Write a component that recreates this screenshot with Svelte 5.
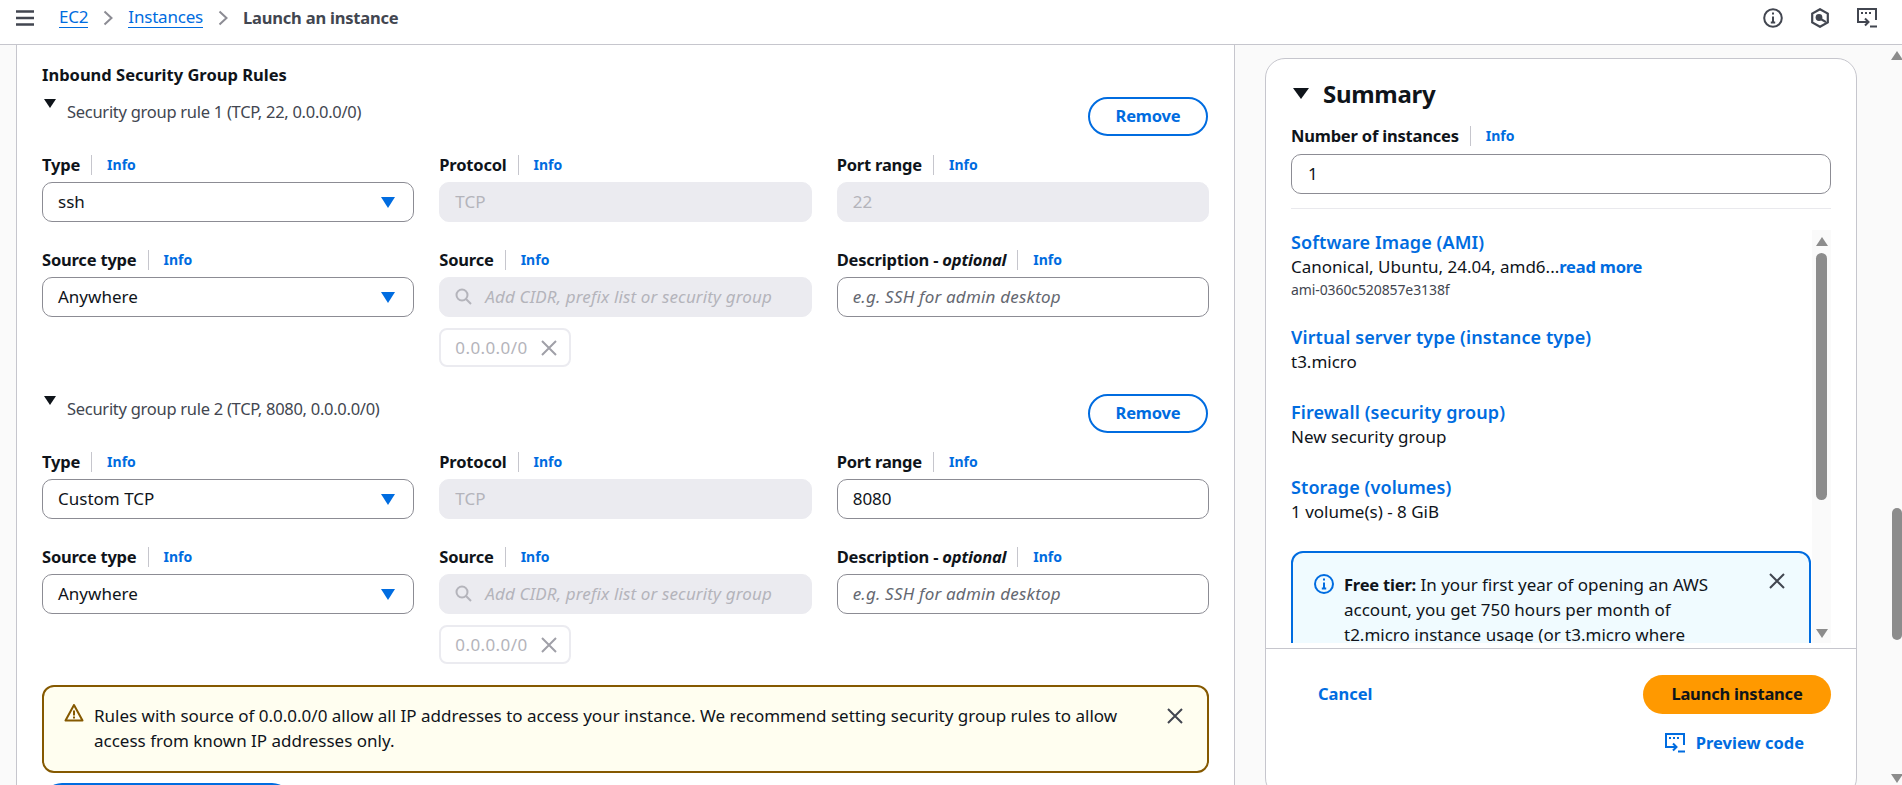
<script>
  const rules = [
    { title: 'Security group rule 1 (TCP, 22, 0.0.0.0/0)', type: 'ssh', port: '22', portDisabled: true },
    { title: 'Security group rule 2 (TCP, 8080, 0.0.0.0/0)', type: 'Custom TCP', port: '8080', portDisabled: false }
  ];
</script>

{#snippet info()}
  <span class="sep"></span><a class="info" href="#top">Info</a>
{/snippet}

{#snippet chevron()}
  <svg class="crumb-sep" width="10" height="16" viewBox="0 0 10 16"><path d="M1.5 1.5 8.5 8l-7 6.5" fill="none" stroke="#8c8c94" stroke-width="2"/></svg>
{/snippet}

{#snippet close()}
  <svg width="16" height="16" viewBox="0 0 16 16"><path d="M1 1l14 14M15 1 1 15" fill="none" stroke="currentColor" stroke-width="2"/></svg>
{/snippet}

{#snippet terminal(color)}
  <svg width="20" height="20" viewBox="0 0 20 20" fill="none" stroke={color} stroke-width="2">
    <path d="M6 14H1V1h18v11"/>
    <path d="M4 5h2M8 5h2M12 5h2" stroke-width="2"/>
    <path d="M4 14h7M8 10.5l3.5 3.5L8 17.5M13 18.5h7"/>
  </svg>
{/snippet}

<div class="page">
  <header class="topbar">
    <svg class="burger" width="18" height="16" viewBox="0 0 18 16"><path d="M0 1.5h18M0 8h18M0 14.5h18" stroke="#424650" stroke-width="2.4"/></svg>
    <nav class="crumbs">
      <a href="#top">EC2</a>
      {@render chevron()}
      <a href="#top">Instances</a>
      {@render chevron()}
      <span class="current">Launch an instance</span>
    </nav>
    <div class="top-icons">
      <svg width="20" height="20" viewBox="0 0 20 20" fill="none" stroke="#424650" stroke-width="2"><circle cx="10" cy="10" r="8.8"/><path d="M10 8.5V15M7.8 14.6h4.4"/><path d="M10 4.6v2" /></svg>
      <svg width="18" height="20" viewBox="0 0 18 20" fill="none" stroke="#424650" stroke-width="2.2"><path d="M9 1.2 16.8 5.6v8.8L9 18.8 1.2 14.4V5.6z"/><circle cx="8" cy="9.5" r="3.4" fill="#424650" stroke="none"/><path d="M9 10.5l6 3.6"/></svg>
      {@render terminal('#424650')}
    </div>
  </header>

  <div class="content">
    <main class="form">
      <h4 class="rules-title">Inbound Security Group Rules</h4>

      {#each rules as rule}
        <section class="rule">
          <div class="rule-head">
            <div class="rule-title"><span class="caret small"></span>{rule.title}</div>
            <button class="remove">Remove</button>
          </div>

          <div class="grid">
            <div class="field">
              <div class="label"><b>Type</b>{@render info()}</div>
              <div class="control select">{rule.type}<span class="arrow"></span></div>
            </div>
            <div class="field">
              <div class="label"><b>Protocol</b>{@render info()}</div>
              <div class="control off">TCP</div>
            </div>
            <div class="field">
              <div class="label"><b>Port range</b>{@render info()}</div>
              <div class="control" class:off={rule.portDisabled}>{rule.port}</div>
            </div>

            <div class="field">
              <div class="label"><b>Source type</b>{@render info()}</div>
              <div class="control select">Anywhere<span class="arrow"></span></div>
            </div>
            <div class="field">
              <div class="label"><b>Source</b>{@render info()}</div>
              <div class="control off search">
                <svg width="17" height="17" viewBox="0 0 17 17" fill="none" stroke="#b4b4bb" stroke-width="2"><circle cx="7" cy="7" r="5.5"/><path d="M11 11l5 5"/></svg>
                <i>Add CIDR, prefix list or security group</i>
              </div>
              <div class="token">0.0.0.0/0 {@render close()}</div>
            </div>
            <div class="field">
              <div class="label"><b>Description - <i>optional</i></b>{@render info()}</div>
              <div class="control placeholder"><i>e.g. SSH for admin desktop</i></div>
            </div>
          </div>
        </section>
      {/each}

      <div class="alert warn">
        <svg class="alert-icon" width="20" height="20" viewBox="0 0 20 20" fill="none" stroke="#855900" stroke-width="2"><path d="M10 2 1.5 17.5h17z" stroke-linejoin="round"/><path d="M10 7.5v5M10 13.6v2"/></svg>
        <p>Rules with source of 0.0.0.0/0 allow all IP addresses to access your instance. We recommend setting security group rules to allow access from known IP addresses only.</p>
        <span class="alert-close">{@render close()}</span>
      </div>

      <button class="add-rule" aria-label="Add security group rule"></button>
    </main>

    <aside class="side">
      <div class="card">
        <h2 class="summary"><span class="caret"></span>Summary</h2>
        <div class="count">
          <div class="label"><b>Number of instances</b>{@render info()}</div>
          <div class="control">1</div>
        </div>
        <div class="scroller">
          <div class="details">
            <div class="item">
              <a href="#top">Software Image (AMI)</a>
              <p>Canonical, Ubuntu, 24.04, amd6...<a href="#top">read more</a></p>
              <small>ami-0360c520857e3138f</small>
            </div>
            <div class="item"><a href="#top">Virtual server type (instance type)</a><p>t3.micro</p></div>
            <div class="item"><a href="#top">Firewall (security group)</a><p>New security group</p></div>
            <div class="item"><a href="#top">Storage (volumes)</a><p>1 volume(s) - 8 GiB</p></div>
            <div class="alert tier">
              <svg class="alert-icon" width="20" height="20" viewBox="0 0 20 20" fill="none" stroke="#006ce0" stroke-width="2"><circle cx="10" cy="10" r="9"/><path d="M10 8.5V15M7.8 14.6h4.4M10 4.6v2"/></svg>
              <p><b>Free tier:</b> In your first year of opening an AWS account, you get 750 hours per month of t2.micro instance usage (or t3.micro where</p>
              <span class="alert-close">{@render close()}</span>
            </div>
          </div>
          <div class="bar inner">
            <span class="up"></span>
            <span class="thumb"></span>
            <span class="down"></span>
          </div>
        </div>
        <footer class="actions">
          <a class="cancel" href="#top">Cancel</a>
          <div class="action-col">
            <button class="launch">Launch instance</button>
            <a class="preview" href="#top">{@render terminal('#006ce0')}Preview code</a>
          </div>
        </footer>
      </div>
    </aside>

    <div class="bar outer">
      <span class="up"></span>
      <span class="thumb"></span>
      <span class="down"></span>
    </div>
  </div>
</div>

<style>
  :global(body) {
    margin: 0;
    background: #fafafa;
  }

  .page {
    height: 785px;
    overflow: hidden;
    font-family: "Noto Sans", "Open Sans", sans-serif;
    font-size: 17px;
    line-height: 25px;
    color: #0f141a;
  }

  a {
    color: #006ce0;
    text-decoration: none;
  }

  p {
    margin: 0;
  }

  .topbar {
    height: 44px;
    background: #fff;
    border-bottom: 1px solid #c6c6cd;
    display: flex;
    align-items: center;
    padding: 0 25px 0 16px;
  }

  .burger {
    margin-top: -9px;
  }

  .crumbs {
    display: flex;
    align-items: center;
    gap: 15px;
    margin-left: 25px;
    margin-top: -9px;
    letter-spacing: -0.2px;
  }

  .crumbs a {
    line-height: 20px;
    border-bottom: 1px solid #006ce0;
  }

  .current {
    font-weight: 700;
    font-size: 16.5px;
    color: #424650;
  }

  .top-icons {
    margin-left: auto;
    margin-top: -9px;
    display: flex;
    gap: 28px;
    align-items: center;
  }

  .content {
    display: flex;
    height: 740px;
  }

  .form {
    width: 1219px;
    margin-left: 16px;
    flex: none;
    box-sizing: border-box;
    background: #fff;
    border-left: 1px solid #c6c6cd;
    border-right: 1px solid #c6c6cd;
    padding: 17px 25px 0 25px;
  }

  .rules-title {
    margin: 0;
    font-size: 16.5px;
    font-weight: 700;
  }

  .rule {
    height: 297px;
  }

  .rule-head {
    display: flex;
    justify-content: space-between;
    align-items: flex-start;
    height: 65px;
  }

  .rule-title {
    display: flex;
    align-items: flex-start;
    color: #424650;
    margin-top: 12px;
    font-size: 16.5px;
    letter-spacing: -0.28px;
  }

  .caret {
    width: 0;
    height: 0;
    border-left: 8px solid transparent;
    border-right: 8px solid transparent;
    border-top: 11px solid #0f141a;
  }

  .caret.small {
    border-left-width: 6.5px;
    border-right-width: 6.5px;
    border-top-width: 9px;
    margin: 0 11px 0 2px;
  }

  .remove {
    width: 120px;
    height: 39px;
    border: 2px solid #006ce0;
    border-radius: 20px;
    background: #fff;
    color: #006ce0;
    font: inherit;
    font-size: 16.5px;
    letter-spacing: -0.2px;
    font-weight: 700;
    padding: 0 0 2px;
    margin: 10px 1px 0 0;
  }

  .grid {
    display: grid;
    grid-template-columns: repeat(3, 1fr);
    column-gap: 25px;
    row-gap: 25px;
  }

  .label {
    display: flex;
    align-items: center;
    height: 25px;
    margin-bottom: 5px;
  }

  .label b {
    font-size: 16.5px;
    font-weight: 700;
    letter-spacing: -0.2px;
  }

  .sep {
    width: 1px;
    height: 20px;
    background: #c6c6cd;
    margin: 0 15px 0 11px;
  }

  .info {
    font-size: 14px;
    font-weight: 700;
  }

  .control {
    height: 40px;
    box-sizing: border-box;
    border: 1px solid #8c8c94;
    border-radius: 10px;
    background: #fff;
    padding: 0 15px 2px;
    display: flex;
    align-items: center;
  }

  .select {
    justify-content: space-between;
  }

  .arrow {
    width: 0;
    height: 0;
    border-left: 7px solid transparent;
    border-right: 7px solid transparent;
    border-top: 11px solid #006ce0;
    margin: 2px 3px 0 0;
  }

  .off {
    background: #ebebf0;
    border-color: #ebebf0;
    color: #b4b4bb;
  }

  .search {
    gap: 13px;
    white-space: nowrap;
  }

  .search i {
    letter-spacing: 0.14px;
  }

  .placeholder {
    color: #656871;
  }

  .placeholder i {
    letter-spacing: 0.2px;
  }

  .token {
    margin-top: 11px;
    width: 132px;
    height: 39px;
    box-sizing: border-box;
    border: 2px solid #ebebf0;
    border-radius: 8px;
    color: #b4b4bb;
    padding: 0 12px 0 14px;
    letter-spacing: 0.4px;
    display: flex;
    align-items: center;
    justify-content: space-between;
  }

  .token svg {
    color: #a0a0a8;
  }

  .alert {
    position: relative;
    box-sizing: border-box;
    border: 2px solid;
    border-radius: 12px;
    display: flex;
    align-items: flex-start;
  }

  .warn {
    margin-top: 4px;
    height: 88px;
    background: #fffef0;
    border-color: #855900;
    padding: 16px 24px 0 20px;
  }

  .warn p {
    width: 1040px;
    margin-left: 10px;
  }

  .alert-close {
    color: #424650;
    display: flex;
    margin-left: auto;
    margin-top: 5px;
  }

  .add-rule {
    display: block;
    margin: 10px 0 0;
    width: 250px;
    height: 40px;
    border: none;
    border-radius: 20px;
    background: #006ce0;
  }

  .side {
    flex: none;
    width: 657px;
    padding: 13px 0 0 30px;
    box-sizing: border-box;
  }

  .card {
    width: 592px;
    height: 740px;
    box-sizing: border-box;
    background: #fff;
    border: 1px solid #c6c6cd;
    border-radius: 20px;
    padding: 0 25px;
  }

  .summary {
    margin: 0;
    padding-top: 3px;
    height: 62px;
    display: flex;
    align-items: center;
    gap: 14px;
    font-size: 24px;
    font-weight: 700;
    letter-spacing: -0.3px;
  }

  .summary .caret {
    margin-left: 2px;
  }

  .count {
    padding-bottom: 14px;
    border-bottom: 1px solid #e9e9ed;
  }

  .count .label {
    margin: -1px 0 6px;
  }

  .count .control {
    padding-left: 16px;
  }

  .scroller {
    margin-top: 21px;
    height: 413px;
    display: flex;
    overflow: hidden;
    justify-content: space-between;
  }

  .details {
    width: 520px;
    flex: none;
  }

  .item {
    height: 75px;
  }

  .item > a {
    font-size: 18px;
    font-weight: 600;
    letter-spacing: 0.1px;
    display: block;
  }

  .item p {
    margin-top: -1px;
  }

  .item p a {
    font-size: 16.5px;
    font-weight: 700;
    letter-spacing: -0.2px;
  }

  .item small {
    display: block;
    font-size: 14px;
    line-height: 20px;
    color: #424650;
    letter-spacing: -0.1px;
    margin-top: 1px;
  }

  .item:first-child {
    height: 95px;
  }

  .tier {
    margin-top: 1px;
    background: #f0fbff;
    border-color: #006ce0;
    padding: 21px 20px 20px 21px;
  }

  .tier p {
    margin-left: 10px;
    width: 372px;
    margin-top: -2px;
  }

  .tier p b {
    font-size: 16.5px;
    font-weight: 700;
    letter-spacing: -0.2px;
  }

  .tier .alert-close {
    margin-top: -1px;
    margin-right: 4px;
  }

  .bar {
    display: flex;
    flex-direction: column;
    align-items: center;
    background: #fafafa;
    flex: none;
  }

  .up,
  .down {
    width: 0;
    height: 0;
    border-left: 6px solid transparent;
    border-right: 6px solid transparent;
  }

  .up {
    border-bottom: 9px solid #8c8c8c;
  }

  .down {
    border-top: 9px solid #8c8c8c;
  }

  .thumb {
    background: #8c8c8c;
    border-radius: 6px;
  }

  .inner {
    width: 19px;
    height: 413px;
    padding-top: 7px;
    box-sizing: border-box;
  }

  .inner .thumb {
    width: 11px;
    height: 247px;
    margin-top: 7px;
  }

  .inner .down {
    margin-top: 129px;
  }

  .outer {
    width: 10px;
    padding-top: 6px;
    height: 740px;
    box-sizing: border-box;
  }

  .outer .thumb {
    width: 10px;
    height: 132px;
    margin-top: 448px;
  }

  .outer .down {
    margin-top: 134px;
  }

  .actions {
    margin: 5px -25px 0;
    border-top: 1px solid #c6c6cd;
    padding: 26px 25px 0 52px;
    display: flex;
    justify-content: space-between;
    align-items: flex-start;
  }

  .cancel {
    font-size: 16.5px;
    font-weight: 700;
    margin-top: 6px;
  }

  .action-col {
    display: flex;
    flex-direction: column;
    align-items: flex-end;
  }

  .launch {
    width: 188px;
    height: 39px;
    border: none;
    border-radius: 20px;
    background: #ff9900;
    color: #0f141a;
    font: inherit;
    font-size: 16.5px;
    letter-spacing: -0.2px;
    font-weight: 700;
    padding: 0 0 2px;
  }

  .preview {
    margin-top: 16px;
    margin-right: 27px;
    display: flex;
    align-items: center;
    gap: 11px;
    font-size: 16.5px;
    font-weight: 700;
  }
</style>
